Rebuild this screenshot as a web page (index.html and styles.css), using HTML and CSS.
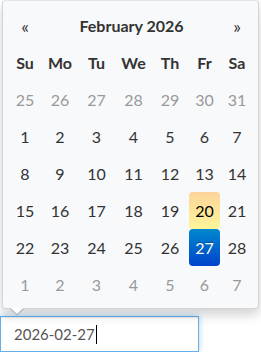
FILE: index.html
```html
<!DOCTYPE html>
<html lang="en">
<head>
    <meta charset="UTF-8">
    <title>Datepicker</title>
    <link rel="stylesheet" href="styles.css">
</head>
<body>
    <div class="datepicker">
        <div class="days">
            <div class="nav">&laquo;</div>
            <div class="switch">February 2026</div>
            <div class="nav">&raquo;</div>

            <div class="dow">Su</div>
            <div class="dow">Mo</div>
            <div class="dow">Tu</div>
            <div class="dow">We</div>
            <div class="dow">Th</div>
            <div class="dow">Fr</div>
            <div class="dow">Sa</div>

            <div class="day old">25</div>
            <div class="day old">26</div>
            <div class="day old">27</div>
            <div class="day old">28</div>
            <div class="day old">29</div>
            <div class="day old">30</div>
            <div class="day old">31</div>

            <div class="day">1</div>
            <div class="day">2</div>
            <div class="day">3</div>
            <div class="day">4</div>
            <div class="day">5</div>
            <div class="day">6</div>
            <div class="day">7</div>

            <div class="day">8</div>
            <div class="day">9</div>
            <div class="day">10</div>
            <div class="day">11</div>
            <div class="day">12</div>
            <div class="day">13</div>
            <div class="day">14</div>

            <div class="day">15</div>
            <div class="day">16</div>
            <div class="day">17</div>
            <div class="day">18</div>
            <div class="day">19</div>
            <div class="day today">20</div>
            <div class="day">21</div>

            <div class="day">22</div>
            <div class="day">23</div>
            <div class="day">24</div>
            <div class="day">25</div>
            <div class="day">26</div>
            <div class="day active">27</div>
            <div class="day">28</div>

            <div class="day new">1</div>
            <div class="day new">2</div>
            <div class="day new">3</div>
            <div class="day new">4</div>
            <div class="day new">5</div>
            <div class="day new">6</div>
            <div class="day new">7</div>
        </div>
    </div>

    <div class="date-input">2026-02-27<span class="caret"></span></div>
</body>
</html>
```

FILE: styles.css
```css
body {
    margin: 0;
    background: #fff;
    font-family: 'Lato', 'Noto Sans', sans-serif;
    color: #333;
}

.datepicker {
    position: relative;
    width: 257px;
    margin-left: 2px;
    padding: 6px 5px 5px 5px;
    box-sizing: border-box;
    background: #f8f9fb;
    border: 1px solid rgba(0, 0, 0, 0.15);
    border-top-color: rgba(0, 0, 0, 0.08);
    border-radius: 4px;
    box-shadow: 0 6px 12px rgba(0, 0, 0, 0.175);
}

/* little arrow pointing at the input */
.datepicker:before {
    content: '';
    position: absolute;
    bottom: -8px;
    left: 7px;
    border-left: 7px solid transparent;
    border-right: 7px solid transparent;
    border-top: 7px solid rgba(0, 0, 0, 0.15);
}
.datepicker:after {
    content: '';
    position: absolute;
    bottom: -6px;
    left: 8px;
    border-left: 6px solid transparent;
    border-right: 6px solid transparent;
    border-top: 6px solid #fff;
}

.days {
    display: grid;
    grid-template-columns: 34px 36px 37px 37px 36px 33px 32px;
    grid-auto-rows: 37px;
    font-size: 16px;
}

.days > div {
    display: flex;
    align-items: center;
    justify-content: center;
}

.switch {
    grid-column: span 5;
    font-weight: bold;
    font-size: 16px;
}

.nav {
    font-size: 18px;
}

.dow {
    font-weight: bold;
}

.day {
    border-radius: 4px;
    margin: 0 1px;
}

.day.old,
.day.new {
    color: #999;
}

.day.today {
    color: #000;
    background: linear-gradient(to bottom, #fdd49a, #fdf59a);
}

.day.active {
    color: #fff;
    background: linear-gradient(to bottom, #0088cc, #0044cc);
    text-shadow: 0 -1px 0 rgba(0, 0, 0, 0.25);
}

.date-input {
    display: flex;
    align-items: center;
    width: 199px;
    height: 36px;
    margin-top: 7px;
    padding: 0 13px;
    box-sizing: border-box;
    border: 1px solid #66afe9;
    box-shadow: inset 0 1px 1px rgba(0, 0, 0, 0.075), 0 0 6px rgba(102, 175, 233, 0.6);
    background: #fff;
    color: #555;
    font-size: 15px;
}

.caret {
    display: inline-block;
    width: 1px;
    height: 19px;
    margin-left: 1px;
    background: #000;
}
```
